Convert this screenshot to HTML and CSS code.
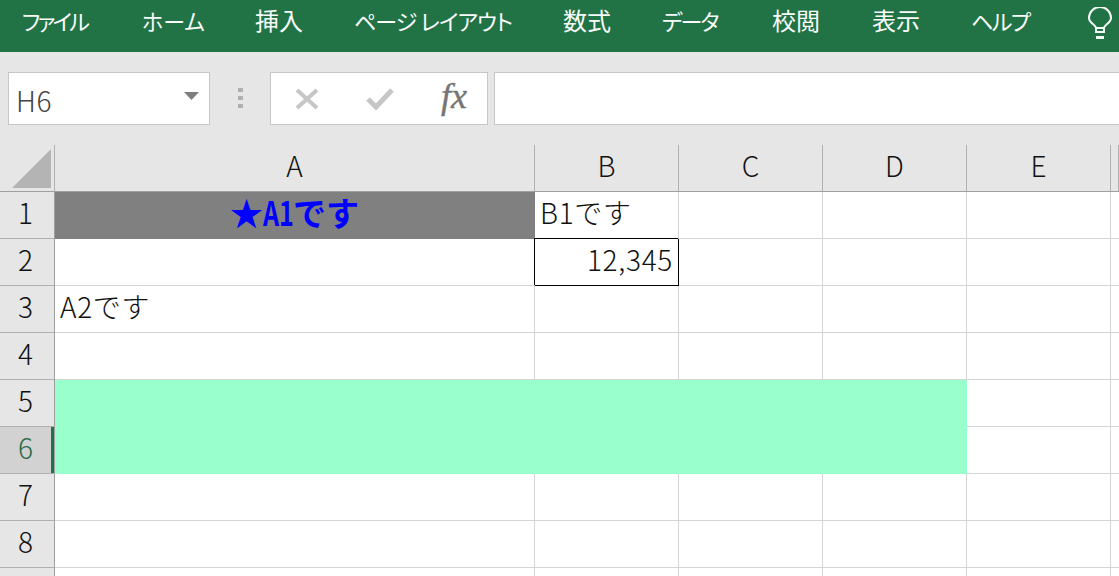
FILE: index.html
```html
<!DOCTYPE html>
<html lang="ja">
<head>
<meta charset="utf-8">
<title>Excel</title>
<link rel="stylesheet" href="styles.css">
</head>
<body>
<div class="app">
  <nav class="ribbon">
    <span class="tab kana t-file">ファイル</span>
    <span class="tab kana">ホーム</span>
    <span class="tab">挿入</span>
    <span class="tab kana t-page">ページ レイアウト</span>
    <span class="tab">数式</span>
    <span class="tab kana t-data">データ</span>
    <span class="tab">校閲</span>
    <span class="tab">表示</span>
    <span class="tab kana t-help">ヘルプ</span>
    <svg class="bulb" width="24" height="32" viewBox="0 0 24 32" fill="none" stroke="#f4f8f5" stroke-width="2">
      <path d="M8 25v-4c0-3-7-5-7-10a11 11 0 0 1 22 0c0 5-7 7-7 10v4z"/>
      <path d="M8 21h8"/>
      <path d="M8 30.500h8" stroke-width="3"/>
    </svg>
  </nav>
  <div class="formula-bar">
    <div class="name-box">
      <span class="name-text">H6</span>
      <svg class="caret" width="16" height="8" viewBox="0 0 16 8"><path d="M0 0h15l-7.500 8z" fill="#7f7f7f"/></svg>
    </div>
    <div class="grip"><i></i><i></i><i></i></div>
    <div class="fx-box">
      <svg width="24" height="22" viewBox="0 0 24 22" fill="none" stroke="#c6c6c6" stroke-width="4"><path d="M2 2l20 18M22 2L2 20"/></svg>
      <svg width="28" height="22" viewBox="0 0 28 22" fill="none" stroke="#c6c6c6" stroke-width="5"><path d="M2 11l8 8L26 2"/></svg>
      <span class="fx">fx</span>
    </div>
    <div class="formula-input"></div>
  </div>
  <div class="sheet">
    <div class="corner"><svg width="39" height="39" viewBox="0 0 39 39"><path d="M39 0v39H0z" fill="#b4b4b4"/></svg></div>
    <div class="col-head">A</div><div class="col-head">B</div><div class="col-head">C</div><div class="col-head">D</div><div class="col-head">E</div><div class="col-head"></div>

    <div class="row-head">1</div><div class="cell gray">★<span class="narrow">A1</span>です</div><div class="cell">B1です</div><div class="cell"></div><div class="cell"></div><div class="cell"></div><div class="cell"></div>
    <div class="row-head">2</div><div class="cell"></div><div class="cell number">12,345</div><div class="cell"></div><div class="cell"></div><div class="cell"></div><div class="cell"></div>
    <div class="row-head">3</div><div class="cell">A2です</div><div class="cell"></div><div class="cell"></div><div class="cell"></div><div class="cell"></div><div class="cell"></div>
    <div class="row-head">4</div><div class="cell"></div><div class="cell"></div><div class="cell"></div><div class="cell"></div><div class="cell"></div><div class="cell"></div>
    <div class="row-head">5</div><div class="cell mint"></div><div class="cell mint"></div><div class="cell mint"></div><div class="cell mint"></div><div class="cell"></div><div class="cell"></div>
    <div class="row-head selected">6</div><div class="cell mint"></div><div class="cell mint"></div><div class="cell mint"></div><div class="cell mint"></div><div class="cell"></div><div class="cell"></div>
    <div class="row-head">7</div><div class="cell"></div><div class="cell"></div><div class="cell"></div><div class="cell"></div><div class="cell"></div><div class="cell"></div>
    <div class="row-head">8</div><div class="cell"></div><div class="cell"></div><div class="cell"></div><div class="cell"></div><div class="cell"></div><div class="cell"></div>
    <div class="row-head"></div><div class="cell"></div><div class="cell"></div><div class="cell"></div><div class="cell"></div><div class="cell"></div><div class="cell"></div>
  </div>
</div>
</body>
</html>
```
FILE: styles.css
```css
* { box-sizing: border-box; }
html, body { margin: 0; height: 100%; overflow: hidden; background: #fff; }
body { font-family: "Noto Sans CJK JP", "Noto Sans", sans-serif; color: #111; }
.app { width: 1119px; height: 576px; overflow: hidden; }

.ribbon {
  height: 52px; background: #217346; color: #f8fbf9;
  display: grid; align-items: center;
  grid-template-columns: 120px 113px 99px 209px 99px 110px 100px 99px 117px auto;
  justify-content: start;
  padding: 0 0 6px 22px;
  font-size: 24px; font-weight: 400; white-space: nowrap;
}
.tab { line-height: 34px; margin-bottom: 6px; }
.kana { font-size: 22px; font-feature-settings: "palt"; }
.t-file { letter-spacing: -2.8px; }
.t-page { letter-spacing: -0.9px; }
.t-data { letter-spacing: -2px; }
.t-help { letter-spacing: -1.5px; }
.bulb { display: block; }

.formula-bar {
  height: 93px; background: #e6e6e6;
  display: flex; align-items: flex-start; padding: 20px 0 0 8px;
}
.name-box {
  width: 202px; height: 53px; background: #fff; border: 1px solid #c6c6c6;
  display: flex; align-items: center; justify-content: space-between;
  padding: 0 9px 0 7px;
}
.name-text { font-size: 28px; font-weight: 300; color: #444; letter-spacing: 0.5px; margin-top: 2px; }
.caret { margin-bottom: 6px; }
.grip { width: 60px; height: 53px; display: flex; flex-direction: column; align-items: center; gap: 4px; padding-top: 16px; }
.grip i { width: 5px; height: 4px; background: #b0b0b0; display: block; }
.fx-box {
  width: 218px; height: 53px; background: #fff; border: 1px solid #c6c6c6;
  display: flex; align-items: center; padding-left: 24px; gap: 47px;
}
.fx { font: italic 36px "Liberation Serif", serif; color: #757575; margin-top: -6px; -webkit-text-stroke: 0.4px #757575; }
.formula-input { flex: 1; height: 53px; margin-left: 6px; background: #fff; border: 1px solid #c6c6c6; border-right: 0; }

.sheet {
  display: grid;
  grid-template-columns: 55px 480px 144px 144px 144px 144px 8px;
  grid-template-rows: repeat(10, 47px);
  font-size: 28px; font-weight: 300;
}
.corner { background: #e6e6e6; border-right: 1px solid #b0b0b0; border-bottom: 1px solid #9f9f9f; padding: 4px 0 0 12px; }
.corner svg { display: block; }
.col-head {
  background: #e6e6e6; border-right: 1px solid #b0b0b0; border-bottom: 1px solid #9f9f9f;
  display: flex; align-items: center; justify-content: center; padding-bottom: 6px;
}
.row-head {
  background: #e6e6e6; border-right: 1px solid #9f9f9f; border-bottom: 1px solid #b0b0b0;
  display: flex; align-items: center; justify-content: center; padding: 0 3px 6px 0;
}
.row-head.selected { background: #d2d2d2; color: #2a6a4a; box-shadow: inset -3px 0 0 #217346; }
.cell {
  border-right: 1px solid #d4d4d4; border-bottom: 1px solid #d4d4d4;
  display: flex; align-items: center; padding: 0 5px 6px;
  white-space: nowrap; letter-spacing: 0.7px;
}
.gray {
  background: #808080; border-color: #808080 transparent #808080 #808080; color: #0000ff;
  justify-content: center; font-weight: 700; font-size: 33px; letter-spacing: 0;
}
.narrow { display: inline-block; width: 30px; transform: scaleX(.76); transform-origin: left center; }
.number {
  justify-content: flex-end; border-color: #000;
  box-shadow: -1px -1px 0 #000;
}
.mint { background: #99ffcc; border-color: transparent; }
```
